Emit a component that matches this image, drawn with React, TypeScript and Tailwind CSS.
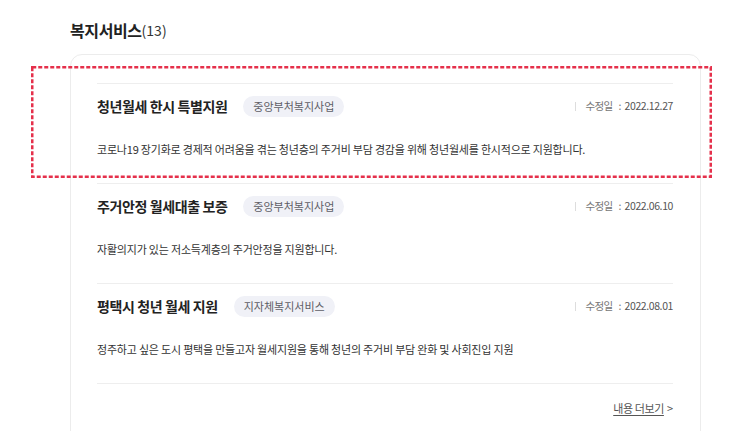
import React from "react";

type Item = { title: string; tag: string; date: string; desc: string };

const items: Item[] = [
  {
    title: "청년월세 한시 특별지원",
    tag: "중앙부처복지사업",
    date: "2022.12.27",
    desc: "코로나19 장기화로 경제적 어려움을 겪는 청년층의 주거비 부담 경감을 위해 청년월세를 한시적으로 지원합니다.",
  },
  {
    title: "주거안정 월세대출 보증",
    tag: "중앙부처복지사업",
    date: "2022.06.10",
    desc: "자활의지가 있는 저소득계층의 주거안정을 지원합니다.",
  },
  {
    title: "평택시 청년 월세 지원",
    tag: "지자체복지서비스",
    date: "2022.08.01",
    desc: "정주하고 싶은 도시 평택을 만들고자 월세지원을 통해 청년의 주거비 부담 완화 및 사회진입 지원",
  },
];

export default function App() {
  return (
    <div
      className="relative w-[729px] h-[431px] overflow-hidden bg-white"
      style={{ fontFamily: '"Noto Sans CJK KR", "Noto Sans", sans-serif' }}
    >
      <div className="pl-[70px] pt-[18px] h-[42px] flex items-center">
        <span className="text-[16px] font-bold leading-[24px] text-[#222] tracking-[-0.4px]">
          복지서비스
        </span>
        <span className="text-[14px] font-normal leading-[24px] text-[#333]">
          (13)
        </span>
      </div>

      <div className="ml-[70px] mt-[12px] w-[631px] h-[420px] border border-[#ececec] rounded-[12px] pl-[26px] pr-[27px] pt-[28px]">
        {items.map((it) => (
          <div key={it.title} className="h-[100px] border-t border-[#eeeeee] pt-[12px]">
            <div className="h-[20px] flex items-center">
              <span className="text-[14px] font-bold text-[#222] tracking-[-0.4px] leading-[20px]">
                {it.title}
              </span>
              <span className="ml-[16px] h-[21px] px-[10px] rounded-full bg-[#f0f1f7] text-[11px] text-[#5e5e66] flex items-center">
                {it.tag}
              </span>
              <div className="ml-auto flex items-center">
                <span className="w-px h-[9px] bg-[#dddddd] mr-[9px]"></span>
                <span className="text-[10.5px] text-[#777] tracking-[-0.6px] leading-[16px]">수정일</span>
                <span className="text-[10.5px] text-[#777] ml-[6px] mr-[3px] leading-[16px]">:</span>
                <span className="text-[10.5px] text-[#555] tracking-[-0.4px] leading-[16px]">{it.date}</span>
              </div>
            </div>
            <p className="mt-[24px] text-[11px] leading-[18px] text-[#333] tracking-[-0.2px]">
              {it.desc}
            </p>
          </div>
        ))}
        <div className="border-t border-[#eeeeee] pt-[15px] flex justify-end items-center">
          <span className="text-[11px] leading-[18px] text-[#555] underline underline-offset-2 tracking-[-0.4px]">
            내용 더보기
          </span>
          <span className="ml-[3px] text-[11px] leading-[18px] text-[#555]">&gt;</span>
        </div>
      </div>

      <svg
        className="absolute left-[31px] top-[66px]"
        width="681"
        height="112"
        viewBox="0 0 681 112"
      >
        <rect
          x="1.25"
          y="1.25"
          width="678.5"
          height="109.5"
          fill="none"
          stroke="#e5304b"
          strokeWidth="2.5"
          strokeDasharray="4 2"
        />
      </svg>
    </div>
  );
}
